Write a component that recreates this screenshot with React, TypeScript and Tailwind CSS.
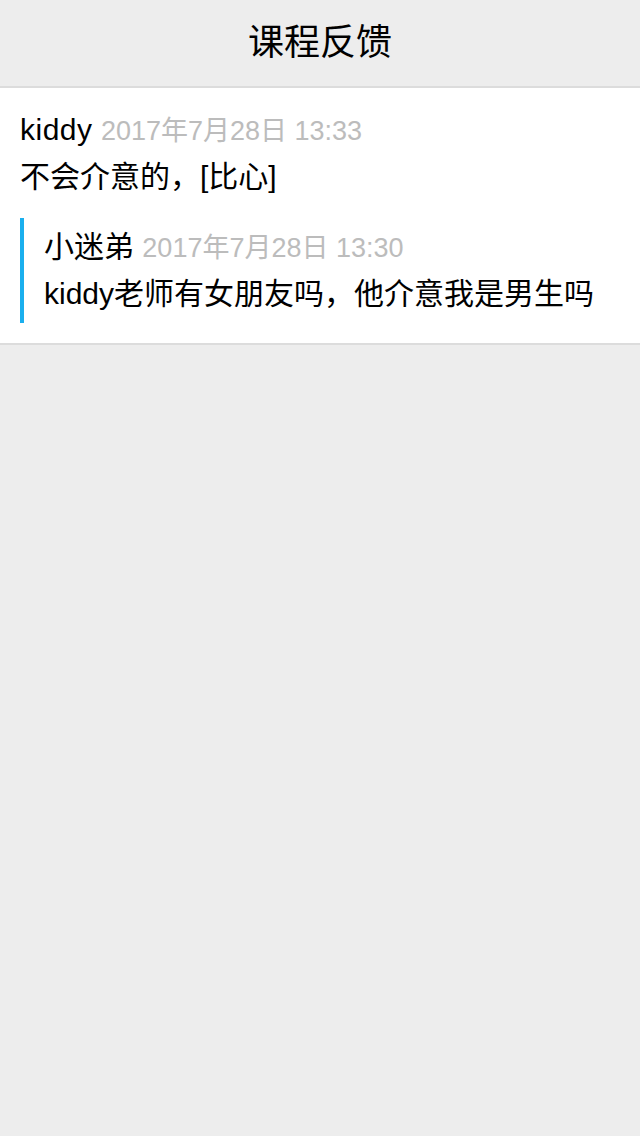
const font = { fontFamily: '"Liberation Sans", "Noto Sans CJK SC", sans-serif' };

export default function App() {
  return (
    <div className="min-h-[1136px] bg-[#ededed]" style={font}>
      <header className="h-[88px] flex items-center justify-center border-b-2 border-[#dcdcdc]">
        <h1 className="text-[36px] text-black">课程反馈</h1>
      </header>

      <div className="bg-white border-b-2 border-[#dcdcdc] px-5 pt-[19px] pb-[20px]">
        <div className="leading-[46px] text-[30px] text-black">
          <div>
            <span className="tracking-[0.5px]">kiddy</span>{' '}
            <span className="text-[27px] text-[#bcbcbc]">2017年7月28日 13:33</span>
          </div>
          <div>不会介意的，[比心]</div>
        </div>

        <div className="mt-[18px] border-l-4 border-[#1aafee] pl-5 pt-[6px] pb-[6px] leading-[46px] text-[30px] text-black">
          <div>
            小迷弟 <span className="text-[27px] text-[#bcbcbc]">2017年7月28日 13:30</span>
          </div>
          <div>kiddy老师有女朋友吗，他介意我是男生吗</div>
        </div>
      </div>
    </div>
  );
}
